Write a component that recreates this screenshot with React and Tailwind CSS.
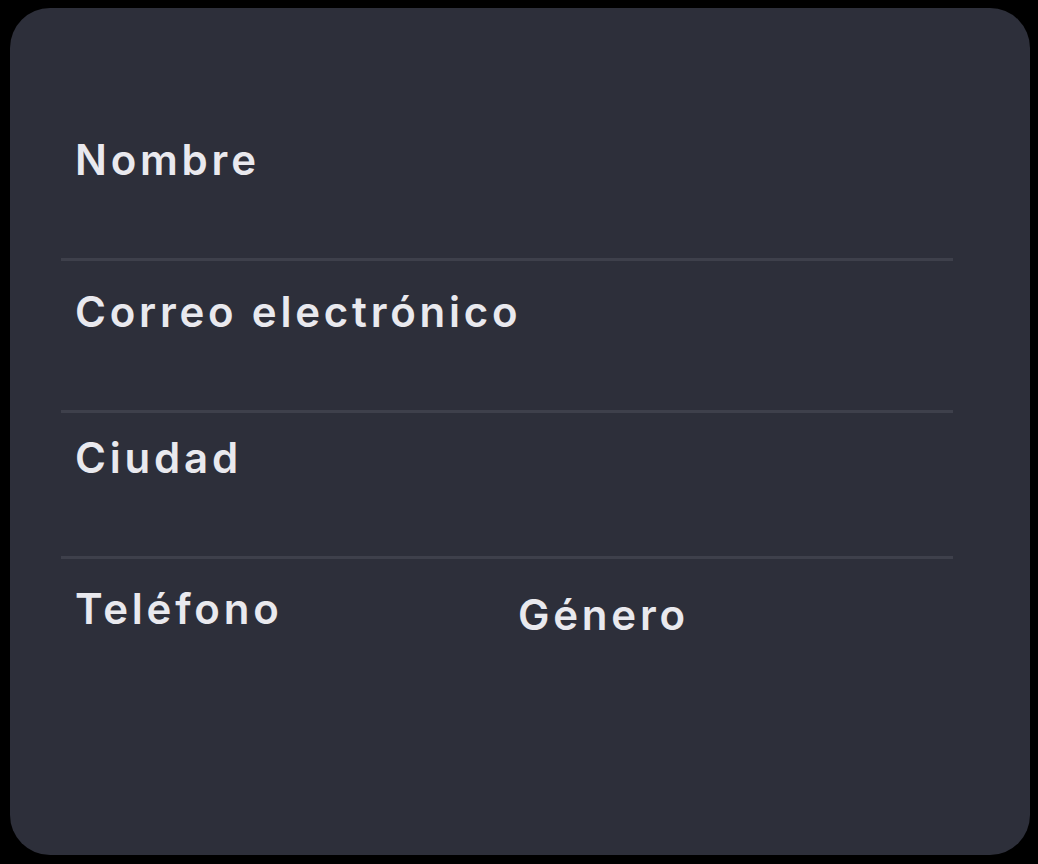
export default function App() {
  return (
    <div className="min-h-[864px] w-full bg-black pt-[8px] pl-[10px] pr-[8px] pb-[9px]" style={{ fontFamily: 'Inter, "Noto Sans", sans-serif' }}>
      <div className="h-[847px] w-[1020px] rounded-[40px] bg-[#2d2f3a] pl-[51px] pr-[77px] pt-[127px]">
        <Field label="Nombre" />
        <div className="-mt-[1px] h-[3px] bg-[#3e404b]" />
        <div className="pt-[26px]">
          <Field label="Correo electrónico" />
        </div>
        <div className="-mt-[1px] h-[3px] bg-[#3e404b]" />
        <div className="pt-[20px]">
          <Field label="Ciudad" />
        </div>
        <div className="-mt-[1px] h-[3px] bg-[#3e404b]" />
        <div className="grid grid-cols-2 pt-[25px]">
          <Field label="Teléfono" />
          <div className="-ml-[3px] pt-[6px]">
            <Field label="Género" />
          </div>
        </div>
      </div>
    </div>
  );
}

function Field({ label }) {
  return (
    <div className="pb-[74px]">
      <div className="h-[50px] pl-[14px] text-[42px] font-semibold leading-[50px] tracking-[0.09em] text-[#e9e9ee]">
        {label}
      </div>
    </div>
  );
}
